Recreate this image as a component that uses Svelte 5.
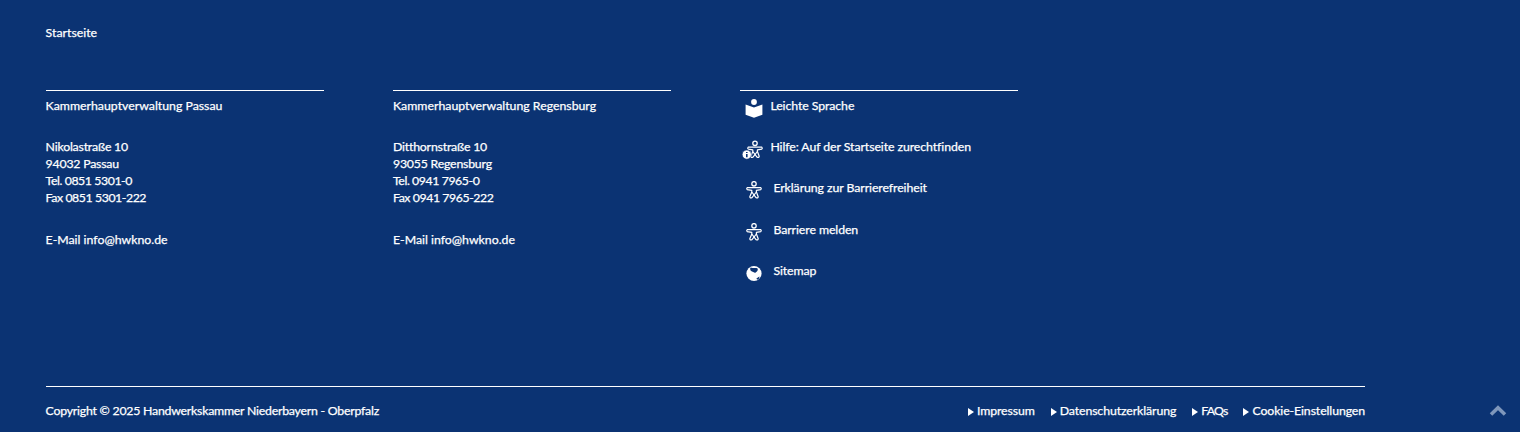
<script>
	const offices = [
		{ name: 'Kammerhauptverwaltung Passau', lines: ['Nikolastraße 10', '94032 Passau', 'Tel. 0851 5301-0', 'Fax 0851 5301-222'] },
		{ name: 'Kammerhauptverwaltung Regensburg', lines: ['Ditthornstraße 10', '93055 Regensburg', 'Tel. 0941 7965-0', 'Fax 0941 7965-222'] }
	];
	const legal = ['Impressum', 'Datenschutzerklärung', 'FAQs', 'Cookie-Einstellungen'];
</script>

{#snippet person()}
	<circle cx="9" cy="2.8" r="2.2" fill="none" stroke="#fff" stroke-width="1.3" />
	<path d="M2.2 6.6 H15.8 Q16.8 7.6 15.8 8.6 L11.4 9.4 V11 L13.2 15.8 Q12.8 17.4 11.2 16.8 L6.8 11 V9.4 L2.2 8.6 Q1.2 7.6 2.2 6.6 Z" fill="none" stroke="#fff" stroke-width="1.2" stroke-linejoin="round" />
	<path d="M6.8 11 L4.8 15.8 Q5.2 17.4 6.8 16.8 L11.4 11" fill="none" stroke="#fff" stroke-width="1.2" stroke-linejoin="round" />
{/snippet}

<footer class="footer">
	<a class="home" href="#top">Startseite</a>

	<div class="columns">
		{#each offices as office}
			<section class="col">
				<h2>{office.name}</h2>
				<p class="address">
					{#each office.lines as line}
						<span>{line}</span>
					{/each}
				</p>
				<p class="mail">E-Mail <a href="#top">info@hwkno.de</a></p>
			</section>
		{/each}

		<ul class="col links">
			<li class="book">
				<svg class="icon" viewBox="0 0 18 19" width="18" height="19">
					<circle cx="9" cy="3" r="2.9" fill="#fff" />
					<path d="M0.6 5.6 L9 8.4 L17.4 5.6 V15.8 L9 18.8 L0.6 15.8 Z" fill="#fff" />
				</svg>
				<a href="#top">Leichte Sprache</a>
			</li>
			<li class="help">
				<svg class="icon" viewBox="0 0 22 20" width="22" height="20">
					<g transform="translate(4 0.5)">{@render person()}</g>
					<circle cx="4.8" cy="14.6" r="4.6" fill="#fff" stroke="#0b3373" stroke-width="0.6" />
					<path d="M4.8 11.9 V12.9 M4.8 13.9 V17.3" stroke="#0b3373" stroke-width="1.6" />
				</svg>
				<a href="#top">Hilfe: Auf der Startseite zurechtfinden</a>
			</li>
			<li>
				<svg class="icon" viewBox="0 0 18 18" width="18" height="18">{@render person()}</svg>
				<a href="#top">Erklärung zur Barrierefreiheit</a>
			</li>
			<li>
				<svg class="icon" viewBox="0 0 18 18" width="18" height="18">{@render person()}</svg>
				<a href="#top">Barriere melden</a>
			</li>
			<li>
				<svg class="icon" viewBox="0 0 18 18" width="18" height="18">
					<circle cx="9" cy="9.5" r="7.6" fill="#fff" />
					<path d="M5.6 3.6 C7.5 4.6 10.6 3.2 12.6 4.4 C13.4 6.4 11.4 8.4 9.8 8.8 C8.6 7.8 6.6 7.6 5.6 6.4 C5 5.4 5 4.4 5.6 3.6 Z M11.4 14.4 L14.4 12.4 L14.2 14.4 L12.2 15.8 Z" fill="#0b3373" />
				</svg>
				<a href="#top">Sitemap</a>
			</li>
		</ul>
	</div>

	<div class="bottom">
		<span class="copy">Copyright © 2025 Handwerkskammer Niederbayern - Oberpfalz</span>
		<nav>
			{#each legal as item}
				<a href="#top"><i></i>{item}</a>
			{/each}
		</nav>
	</div>

	<a class="to-top" href="#top" aria-label="Nach oben">
		<svg viewBox="0 0 18 11" width="18" height="11">
			<path d="M2 9.5 L9 2.8 L16 9.5" fill="none" stroke="#7f97bb" stroke-width="3.6" />
		</svg>
	</a>
</footer>

<style>
	:global(body) {
		margin: 0;
		background: #0b3373;
	}

	.footer {
		position: relative;
		height: 432px;
		box-sizing: border-box;
		padding: 24px 155px 0 45.6px;
		background: #0b3373;
		color: #fff;
		font-family: Lato, 'Noto Sans', sans-serif;
		font-size: 12.3px;
		line-height: 17px;
		-webkit-text-stroke: 0.25px #fff;
		overflow: hidden;
	}

	a {
		color: inherit;
		text-decoration: none;
	}

	.home {
		display: block;
	}

	.columns {
		display: flex;
		gap: 69.4px;
		margin-top: 49px;
		height: 296px;
	}

	.col {
		width: 278px;
		border-top: 1px solid #fff;
		padding-top: 6px;
		margin: 0;
	}

	h2 {
		margin: 0;
		font-size: inherit;
		font-weight: 400;
	}

	.address {
		margin: 24px 0 0;
		letter-spacing: -0.2px;
	}

	.address span {
		display: block;
	}

	.address span:nth-child(n + 3) {
		letter-spacing: -0.42px;
	}

	.mail {
		margin: 24.5px 0 0;
	}

	.links {
		list-style: none;
		display: flex;
		flex-direction: column;
		gap: 24.2px;
		padding-left: 0;
		letter-spacing: -0.08px;
	}

	.links li {
		display: flex;
		align-items: flex-start;
		height: 17px;
		padding-left: 5px;
		gap: 10px;
	}

	.links li.book {
		gap: 7px;
	}

	.links li.help {
		padding-left: 2px;
		gap: 6px;
	}

	.icon {
		flex: none;
		margin-top: 2px;
	}

	.bottom {
		display: flex;
		justify-content: space-between;
		border-top: 1px solid #fff;
		padding-top: 15px;
	}

	.copy {
		letter-spacing: -0.23px;
	}

	nav {
		display: flex;
		gap: 16px;
		letter-spacing: -0.1px;
	}

	nav a:nth-child(3) {
		letter-spacing: -0.8px;
	}

	nav i {
		display: inline-block;
		margin-right: 3px;
		border-left: 6px solid #fff;
		border-top: 4px solid transparent;
		border-bottom: 4px solid transparent;
		vertical-align: -0.5px;
	}

	.to-top {
		position: absolute;
		right: 13px;
		bottom: 16px;
		line-height: 0;
	}
</style>
